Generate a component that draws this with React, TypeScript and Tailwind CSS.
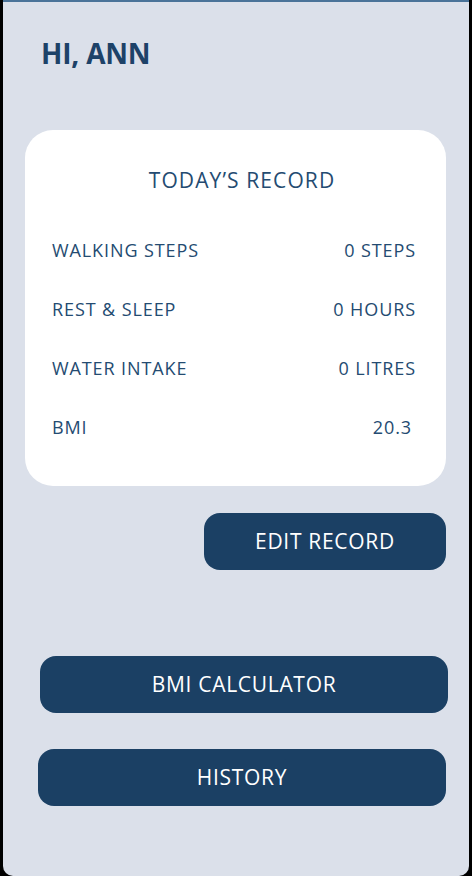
import React from 'react';

const rows = [
    { label: 'WALKING STEPS', value: '0 STEPS' },
    { label: 'REST & SLEEP', value: '0 HOURS' },
    { label: 'WATER INTAKE', value: '0 LITRES' },
    { label: 'BMI', value: '20.3' },
];

export default function App() {
    return (
        <div className="w-[472px] h-[876px] bg-black pl-[3px] pr-[3px] overflow-hidden" style={{ fontFamily: '"Open Sans", "Noto Sans", sans-serif' }}>
            <div className="h-full bg-[#dbe0ea] border-t-2 border-[#4a7399] rounded-b-[10px] flex flex-col">
                <h1 className="mt-[33px] ml-[38px] text-[28px] leading-[36px] font-bold text-[#1d4268] tracking-[-0.2px]">HI, ANN</h1>

                <div className="mt-[59px] ml-[22px] mr-[23px] h-[356px] bg-white rounded-[28px] pt-[36px] px-[27px]">
                    <h2 className="text-center pl-[13px] text-[21px] leading-[28px] tracking-[1.1px] text-[#244b71]">TODAY’S RECORD</h2>
                    <div className="mt-[44px] flex flex-col gap-[34px] pr-[3px]">
                        {rows.map((row) => (
                            <div key={row.label} className="flex justify-between items-center text-[18px] leading-[25px] tracking-[0.9px] text-[#244b71]">
                                <span>{row.label}</span>
                                <span className={row.label === 'BMI' ? 'mr-[4px]' : ''}>{row.value}</span>
                            </div>
                        ))}
                    </div>
                </div>

                <div className="mt-[27px] flex justify-end mr-[23px]">
                    <button className="w-[242px] h-[57px] rounded-[16px] bg-[#1b4064] text-white text-[21px] tracking-[0.7px]">EDIT RECORD</button>
                </div>

                <div className="mt-[86px] ml-[37px] mr-[21px] flex flex-col gap-[36px]">
                    <button className="w-full h-[57px] rounded-[16px] bg-[#1b4064] text-white text-[21px] tracking-[0.7px]">BMI CALCULATOR</button>
                    <button className="w-full h-[57px] rounded-[16px] bg-[#1b4064] text-white text-[21px] tracking-[0.7px] -ml-[2px]">HISTORY</button>
                </div>
            </div>
        </div>
    );
}
